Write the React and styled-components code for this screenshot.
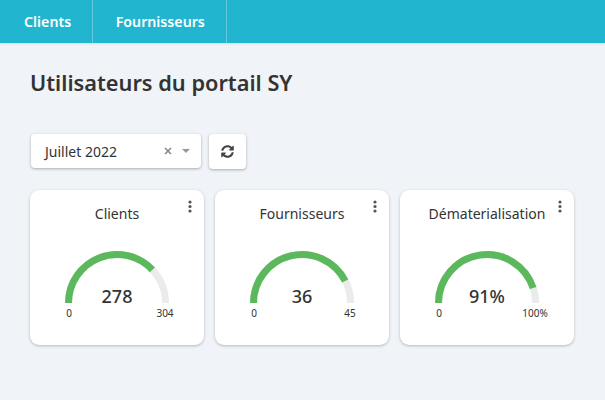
import React from 'react';
import styled, { createGlobalStyle } from 'styled-components';
import { FaSyncAlt } from 'react-icons/fa';

const GlobalStyle = createGlobalStyle`
  html, body {
    margin: 0;
    padding: 0;
    background: #f0f3f8;
    font-family: "Noto Sans", "Open Sans", sans-serif;
    color: #333;
  }
`;

// Half circle gauge, value is a fraction of the arc
const Gauge = ({ fraction }) => {
  const r = 48.5;
  const cx = 52;
  const cy = 53;
  const angle = Math.PI * (1 - fraction);
  const x = cx + r * Math.cos(angle);
  const y = cy - r * Math.sin(angle);
  return (
    <svg width="104" height="53" viewBox="0 0 104 53">
      <path d={`M ${cx - r} ${cy} A ${r} ${r} 0 0 1 ${cx + r} ${cy}`} fill="none" stroke="#ebebeb" strokeWidth="7" />
      <path d={`M ${cx - r} ${cy} A ${r} ${r} 0 0 1 ${x} ${y}`} fill="none" stroke="#5cb85c" strokeWidth="7" />
    </svg>
  );
};

const Kebab = () => (
  <svg width="4" height="13" viewBox="0 0 4 13">
    <circle cx="2" cy="2" r="1.6" fill="#555" />
    <circle cx="2" cy="6.5" r="1.6" fill="#555" />
    <circle cx="2" cy="11" r="1.6" fill="#555" />
  </svg>
);

const ClearGlyph = () => (
  <svg width="8" height="8" viewBox="0 0 8 8">
    <path d="M1 1 L7 7 M7 1 L1 7" stroke="#8a8a8a" strokeWidth="1.7" fill="none" />
  </svg>
);

const cards = [
  { title: 'Clients', value: '278', max: '304', fraction: 0.76 },
  { title: 'Fournisseurs', value: '36', max: '45', fraction: 0.85 },
  { title: 'Dématerialisation', value: '91%', max: '100%', fraction: 0.9 },
];

const App = () => (
  <Page>
    <GlobalStyle />
    <NavBar>
      <NavItem>Clients</NavItem>
      <NavItem>Fournisseurs</NavItem>
    </NavBar>
    <Content>
      <Title>Utilisateurs du portail SY</Title>
      <Filters>
        <Select>
          <SelectValue>Juillet 2022</SelectValue>
          <ClearIcon><ClearGlyph /></ClearIcon>
          <Caret />
        </Select>
        <RefreshButton>
          <FaSyncAlt size={13} color="#444" />
        </RefreshButton>
      </Filters>
      <CardRow>
        {cards.map((card) => (
          <Card key={card.title}>
            <MenuButton><Kebab /></MenuButton>
            <CardTitle>{card.title}</CardTitle>
            <GaugeWrap>
              <Gauge fraction={card.fraction} />
              <GaugeValue>{card.value}</GaugeValue>
            </GaugeWrap>
            <GaugeLabels>
              <GaugeLabel>0</GaugeLabel>
              <GaugeLabel>{card.max}</GaugeLabel>
            </GaugeLabels>
          </Card>
        ))}
      </CardRow>
    </Content>
  </Page>
);

const Page = styled.div`
  width: 605px;
  height: 400px;
  overflow: hidden;
`;

const NavBar = styled.div`
  display: flex;
  height: 43px;
  padding-left: 1.5px;
  background: #21b5cf;
  box-shadow: 0 1px 2px rgba(0, 0, 0, 0.1);
`;

const NavItem = styled.div`
  display: flex;
  align-items: center;
  padding: 0 21px 0 22.5px;
  border-right: 1px solid rgba(255, 255, 255, 0.3);
  color: #fff;
  font-size: 14.2px;
  font-weight: 600;
`;

const Content = styled.div`
  padding: 26px 31px 0 30px;
`;

const Title = styled.h1`
  margin: 0 0 37px;
  font-size: 21.75px;
  line-height: 28px;
  font-weight: 600;
  color: #333;
`;

const Filters = styled.div`
  display: flex;
  gap: 8px;
  margin-left: 1px;
`;

const Select = styled.div`
  display: flex;
  align-items: center;
  width: 170px;
  height: 34px;
  box-sizing: border-box;
  padding: 0 11px 0 14px;
  background: #fff;
  border-radius: 4px;
  box-shadow: 0 1px 3px rgba(0, 0, 0, 0.3);
`;

const SelectValue = styled.span`
  flex: 1;
  font-size: 14px;
  color: #333;
`;

const ClearIcon = styled.span`
  display: flex;
  margin-right: 10px;
`;

const Caret = styled.span`
  width: 0;
  height: 0;
  border-left: 4px solid transparent;
  border-right: 4px solid transparent;
  border-top: 4px solid #999;
`;

const RefreshButton = styled.button`
  display: flex;
  align-items: center;
  justify-content: center;
  width: 37px;
  height: 35px;
  padding: 0;
  border: none;
  background: #fff;
  border-radius: 4px;
  box-shadow: 0 1px 3px rgba(0, 0, 0, 0.3);
`;

const CardRow = styled.div`
  display: flex;
  gap: 11px;
  margin-top: 21px;
`;

const Card = styled.div`
  position: relative;
  width: 174px;
  height: 155px;
  box-sizing: border-box;
  padding-top: 14px;
  background: #fff;
  border-radius: 9px;
  box-shadow: 0 1px 3px rgba(0, 0, 0, 0.25);
  display: flex;
  flex-direction: column;
  align-items: center;
`;

const MenuButton = styled.div`
  position: absolute;
  top: 10px;
  right: 12px;
  line-height: 0;
`;

const CardTitle = styled.div`
  font-size: 14px;
  line-height: 20px;
  color: #333;
`;

const GaugeWrap = styled.div`
  position: relative;
  width: 104px;
  height: 53px;
  margin-top: 26px;
`;

const GaugeValue = styled.div`
  position: absolute;
  left: 0;
  right: 0;
  bottom: -5px;
  text-align: center;
  font-size: 18px;
  line-height: 24px;
  font-weight: 500;
  color: #333;
`;

const GaugeLabels = styled.div`
  display: flex;
  justify-content: space-between;
  width: 96px;
  margin-top: 4px;
`;

const GaugeLabel = styled.span`
  display: flex;
  justify-content: center;
  width: 0;
  white-space: nowrap;
  font-size: 10px;
  line-height: 12px;
  color: #333;
`;

export default App;
